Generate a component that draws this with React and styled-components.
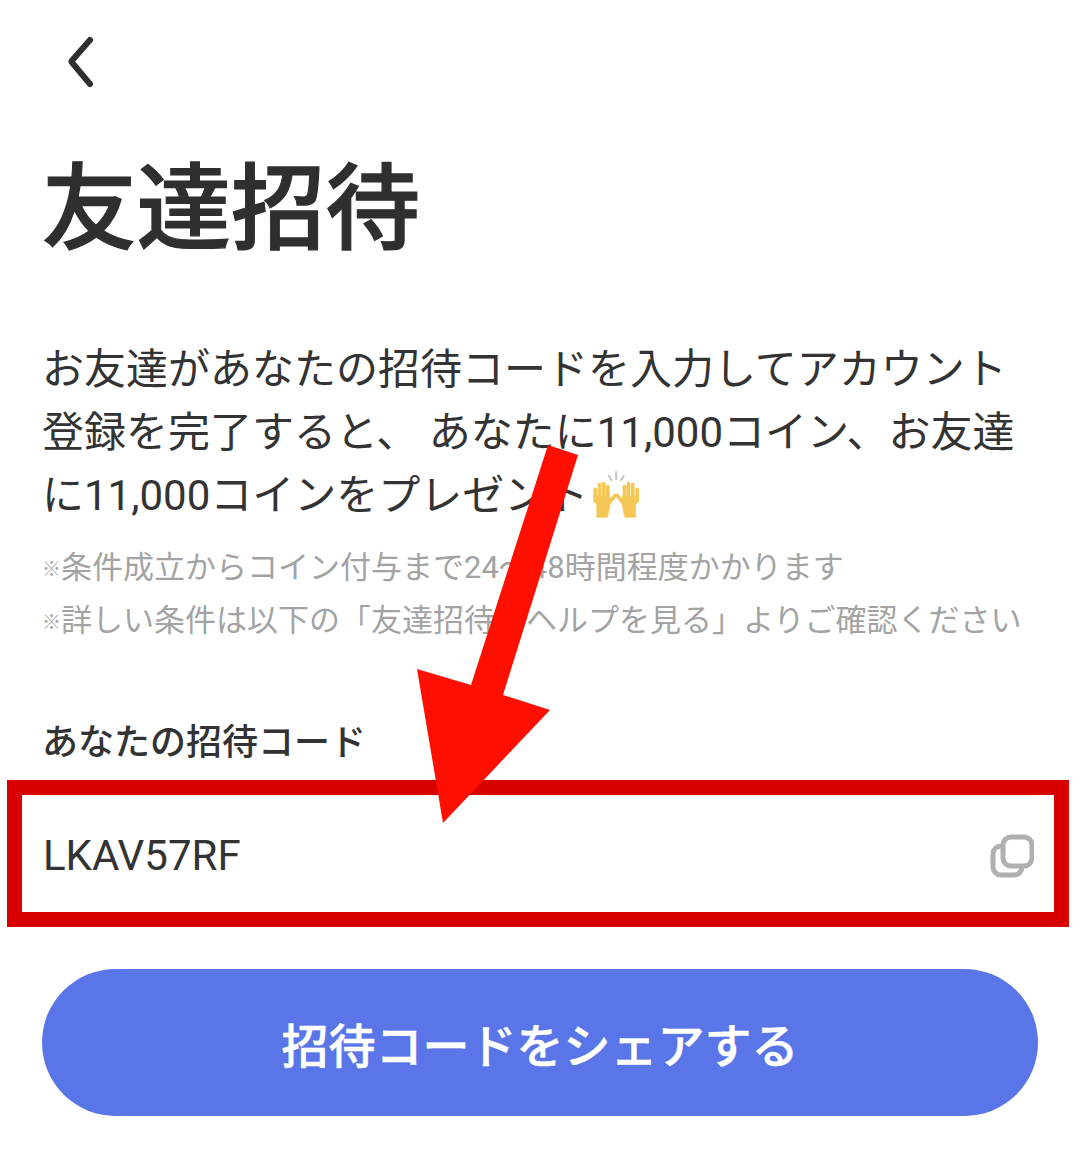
import React from "react";
import styled, { createGlobalStyle } from "styled-components";

const GlobalStyle = createGlobalStyle`
  html, body {
    margin: 0;
    padding: 0;
    background: #fff;
  }
  body {
    font-family: Roboto, "Noto Sans CJK JP", sans-serif;
    color: #333;
  }
`;

const Page = styled.div`
  position: relative;
  width: 1080px;
  height: 1163px;
  overflow: hidden;
  box-sizing: border-box;
  padding: 0 42px;
  background: #fff;
`;

const BackButton = styled.button`
  display: block;
  width: 80px;
  height: 50px;
  margin: 36px 0 0 0;
  padding: 0 0 0 24px;
  border: 0;
  background: none;
  svg {
    display: block;
  }
`;

const Title = styled.h1`
  margin: 59px 0 0;
  font-size: 94.5px;
  line-height: 130px;
  font-weight: 500;
  -webkit-text-stroke: 1.2px #2f2f2f;
  color: #2f2f2f;
  white-space: nowrap;
`;

const Lead = styled.p`
  margin: 63px 0 0;
  font-size: 42px;
  line-height: 63px;
  font-weight: 400;
  color: #333;
  white-space: nowrap;
`;

const Emoji = styled.svg`
  display: inline-block;
  vertical-align: -8px;
  margin-left: 4px;
`;

const Notes = styled.div`
  margin-top: 14px;
`;

const Note = styled.p`
  margin: 0;
  font-size: 31px;
  line-height: 53px;
  color: #a3a3a3;
  white-space: nowrap;
`;

const NoteMark = styled.span`
  display: inline-block;
  width: 19px;
  font-size: 19px;
  line-height: 1;
  vertical-align: 2px;
`;

const Label = styled.div`
  margin-top: 70px;
  font-size: 36px;
  line-height: 52px;
  font-weight: 500;
  color: #333;
`;

const CodeBox = styled.div`
  display: flex;
  align-items: center;
  justify-content: space-between;
  box-sizing: border-box;
  width: 1062px;
  height: 147px;
  margin: 11px 0 0 -35px;
  padding: 4px 20px 0 21px;
  border: 15px solid #d90000;
  font-size: 42px;
  color: #333;
`;

const ShareButton = styled.button`
  display: block;
  width: 996px;
  height: 147px;
  margin: 42px 0 0;
  padding: 0;
  border: 0;
  border-radius: 74px;
  background: #5975e8;
  color: #fff;
  font-family: inherit;
  font-size: 47px;
  font-weight: 500;
  -webkit-text-stroke: 0.5px #fff;
`;

const ArrowOverlay = styled.svg`
  position: absolute;
  left: 0;
  top: 0;
  pointer-events: none;
`;

const Hand = () => (
  <g fill="#f5c757" stroke="#f5c757" strokeLinecap="round" strokeLinejoin="round">
    <path strokeWidth="11" fill="none" d="M45 74v36M58 60v40M71 57v40M83 66v36M84 118l21-26" />
    <path strokeWidth="2" d="M41 95h48v30l-7 33H50v-33z" />
  </g>
);

const HandsIcon = () => (
  <Emoji width="49" height="48" viewBox="36 16 146 144">
    <path
      d="M108 20v25M85 32l10 16M132 32l-11 16"
      stroke="#c6c6c6"
      strokeWidth="6"
      fill="none"
    />
    <Hand />
    <g transform="translate(216 0) scale(-1 1)">
      <Hand />
    </g>
  </Emoji>
);

const App = () => (
  <>
    <GlobalStyle />
    <Page>
      <BackButton aria-label="戻る">
        <svg width="30" height="54" viewBox="0 0 30 54">
          <path
            d="M24 4 6 24.5a1.5 1.5 0 0 0 0 2L24 48"
            fill="none"
            stroke="#2f2f2f"
            strokeWidth="6"
            strokeLinecap="round"
          />
        </svg>
      </BackButton>
      <Title>友達招待</Title>
      <Lead>
        お友達があなたの招待コードを入力してアカウント
        <br />
        登録を完了すると、 あなたに11,000コイン、お友達
        <br />
        に11,000コインをプレゼント
        <HandsIcon />
      </Lead>
      <Notes>
        <Note>
          <NoteMark>※</NoteMark>条件成立からコイン付与まで24〜48時間程度かかります
        </Note>
        <Note>
          <NoteMark>※</NoteMark>詳しい条件は以下の「友達招待のヘルプを見る」よりご確認ください
        </Note>
      </Notes>
      <Label>あなたの招待コード</Label>
      <CodeBox>
        LKAV57RF
        <svg width="44" height="44" viewBox="0 0 44 44" fill="none" stroke="#b0b0b0" strokeWidth="5">
          <rect x="3" y="12" width="29" height="29" rx="8" />
          <rect x="13" y="3" width="29" height="29" rx="8" fill="#fff" />
        </svg>
      </CodeBox>
      <ShareButton>招待コードをシェアする</ShareButton>
      <ArrowOverlay width="1080" height="1163" viewBox="0 0 1080 1163">
        <polygon
          fill="#ff0f00"
          points="548,445 578,455 503,695 550,710 443,823 417,669 471,685"
        />
      </ArrowOverlay>
    </Page>
  </>
);

export default App;
